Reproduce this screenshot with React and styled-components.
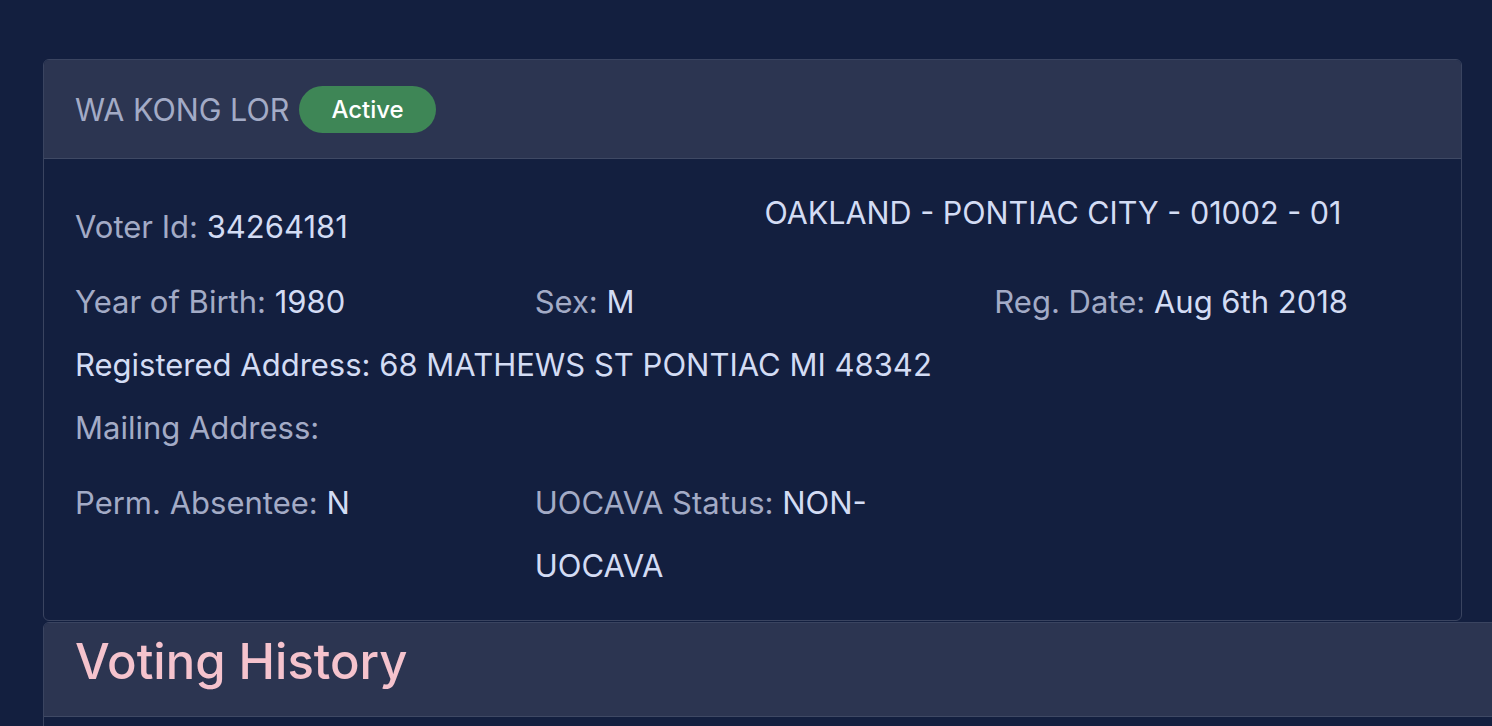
import React from "react";
import styled, { createGlobalStyle } from "styled-components";

const GlobalStyle = createGlobalStyle`
  html, body {
    margin: 0;
    background: #131f3f;
  }
  body {
    font-family: Inter, "Noto Sans", sans-serif;
  }
`;

const Page = styled.div`
  height: 726px;
  padding: 59px 30px 0 43px;
  box-sizing: border-box;
  overflow: hidden;
`;

const Card = styled.div`
  width: ${(props) => props.width || "1419px"};
  box-sizing: border-box;
  border: 1.5px solid #3a4460;
  border-radius: 6px;
  background: #131f3f;
  margin-bottom: 1px;
`;

const CardHeader = styled.div`
  display: flex;
  align-items: center;
  gap: 10px;
  height: ${(props) => props.height || "99px"};
  box-sizing: border-box;
  padding: 0 31px ${(props) => props.padBottom || "0"};
  background: #2c3551;
  border-bottom: 1.5px solid #3f4964;
  border-radius: 5px 5px 0 0;
`;

const Name = styled.span`
  font-size: 30.5px;
  color: #a3abc6;
`;

const Badge = styled.span`
  display: inline-flex;
  align-items: center;
  justify-content: center;
  height: 47px;
  padding: 0 32px;
  border-radius: 24px;
  background: #3e8656;
  color: #ffffff;
  font-size: 24px;
  font-weight: 500;
`;

const Title = styled.h2`
  margin: 0;
  font-size: 49px;
  font-weight: 500;
  color: #f5c3cd;
`;

const CardBody = styled.div`
  padding: 36px 19px 23px;
  min-height: ${(props) => props.minHeight || "0"};
`;

const Row = styled.div`
  display: grid;
  grid-template-columns: ${(props) => props.cols || "1fr"};
  margin-bottom: ${(props) => props.gap || "0"};
`;

const Col = styled.div`
  padding: 0 12px;
  min-width: 0;
`;

const Line = styled.p`
  margin: 0;
  font-size: 31px;
  line-height: 63px;
  color: ${(props) => (props.bright ? "#d3dcf4" : "#a3abc6")};
`;

const Value = styled.span`
  color: #d3dcf4;
`;

const District = styled.p`
  margin: 0;
  font-size: 30.5px;
  line-height: 35px;
  color: #d3dcf4;
`;

export default function App() {
  return (
    <>
      <GlobalStyle />
      <Page>
        <Card>
          <CardHeader>
            <Name>WA KONG LOR</Name>
            <Badge>Active</Badge>
          </CardHeader>
          <CardBody>
            <Row cols="1fr 1fr" gap="12px">
              <Col>
                <Line>
                  Voter Id: <Value>34264181</Value>
                </Line>
              </Col>
              <Col>
                <District>OAKLAND - PONTIAC CITY - 01002 - 01</District>
              </Col>
            </Row>
            <Row cols="1fr 1fr 1fr">
              <Col>
                <Line>
                  Year of Birth: <Value>1980</Value>
                </Line>
              </Col>
              <Col>
                <Line>
                  Sex: <Value>M</Value>
                </Line>
              </Col>
              <Col>
                <Line>
                  Reg. Date: <Value>Aug 6th 2018</Value>
                </Line>
              </Col>
            </Row>
            <Row>
              <Col>
                <Line bright>Registered Address: 68 MATHEWS ST PONTIAC MI 48342</Line>
              </Col>
            </Row>
            <Row gap="12px">
              <Col>
                <Line>Mailing Address:</Line>
              </Col>
            </Row>
            <Row cols="1fr 1fr 1fr">
              <Col>
                <Line>
                  Perm. Absentee: <Value>N</Value>
                </Line>
              </Col>
              <Col>
                <Line>
                  UOCAVA Status: <Value>NON-UOCAVA</Value>
                </Line>
              </Col>
              <Col />
            </Row>
          </CardBody>
        </Card>
        <Card width="1480px">
          <CardHeader height="94px" padBottom="16px">
            <Title>Voting History</Title>
          </CardHeader>
          <CardBody minHeight="200px" />
        </Card>
      </Page>
    </>
  );
}
